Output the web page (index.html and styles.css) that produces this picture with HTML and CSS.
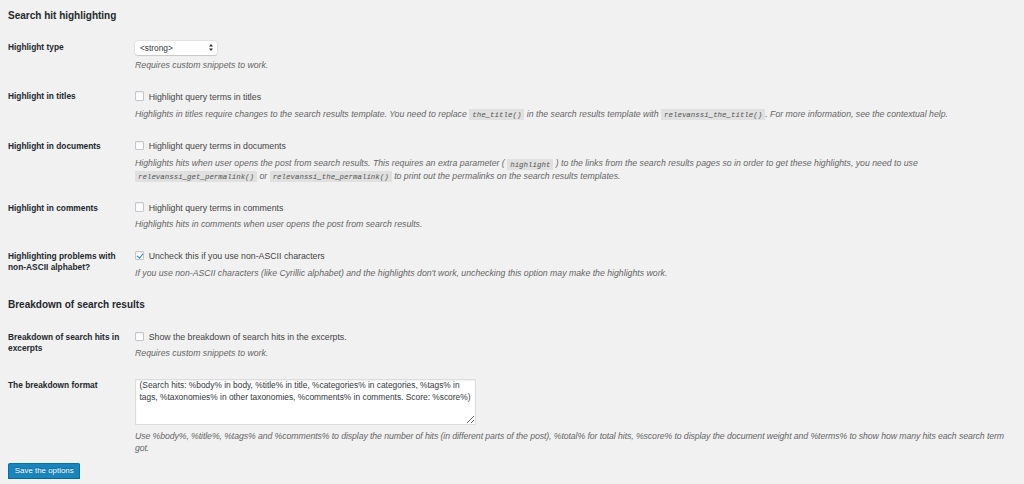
FILE: index.html
```html
<!DOCTYPE html>
<html lang="en">
<head>
<meta charset="utf-8">
<title>Relevanssi settings</title>
<link rel="stylesheet" href="styles.css">
</head>
<body>
<div class="wrap">
  <h2 class="section-title">Search hit highlighting</h2>
  <div class="form-table">
    <div class="row">
      <div class="th">Highlight type</div>
      <div class="td">
        <span class="select-wrap">
          <select class="select"><option>&lt;strong&gt;</option></select>
          <svg class="select-arrow" width="4" height="7" viewBox="0 0 4 7"><path d="M2 0 L4 2.6 H0 Z M2 7 L4 4.4 H0 Z" fill="#333"/></svg>
        </span>
        <p class="description description--after-select">Requires custom snippets to work.</p>
      </div>
    </div>
    <div class="row">
      <div class="th">Highlight in titles</div>
      <div class="td">
        <label class="check-line"><input type="checkbox" class="checkbox"> Highlight query terms in titles</label>
        <p class="description description--code">Highlights in titles require changes to the search results template. You need to replace <code>the_title()</code> in the search results template with <code>relevanssi_the_title()</code>. For more information, see the contextual help.</p>
      </div>
    </div>
    <div class="row">
      <div class="th">Highlight in documents</div>
      <div class="td">
        <label class="check-line"><input type="checkbox" class="checkbox"> Highlight query terms in documents</label>
        <p class="description description--code">Highlights hits when user opens the post from search results. This requires an extra parameter ( <code>highlight</code> ) to the links from the search results pages so in order to get these highlights, you need to use <code>relevanssi_get_permalink()</code> or <code>relevanssi_the_permalink()</code> to print out the permalinks on the search results templates.</p>
      </div>
    </div>
    <div class="row">
      <div class="th">Highlight in comments</div>
      <div class="td">
        <label class="check-line"><input type="checkbox" class="checkbox"> Highlight query terms in comments</label>
        <p class="description">Highlights hits in comments when user opens the post from search results.</p>
      </div>
    </div>
    <div class="row">
      <div class="th">Highlighting problems with non-ASCII alphabet?</div>
      <div class="td">
        <label class="check-line"><input type="checkbox" class="checkbox" checked> Uncheck this if you use non-ASCII characters</label>
        <p class="description">If you use non-ASCII characters (like Cyrillic alphabet) and the highlights don't work, unchecking this option may make the highlights work.</p>
      </div>
    </div>
  </div>

  <h2 class="section-title section-title--spaced">Breakdown of search results</h2>
  <div class="form-table">
    <div class="row">
      <div class="th">Breakdown of search hits in excerpts</div>
      <div class="td">
        <label class="check-line"><input type="checkbox" class="checkbox"> Show the breakdown of search hits in the excerpts.</label>
        <p class="description">Requires custom snippets to work.</p>
      </div>
    </div>
    <div class="row">
      <div class="th">The breakdown format</div>
      <div class="td">
        <textarea class="textarea">(Search hits: %body% in body, %title% in title, %categories% in categories, %tags% in tags, %taxonomies% in other taxonomies, %comments% in comments. Score: %score%)</textarea>
        <p class="description description--after-textarea">Use %body%, %title%, %tags% and %comments% to display the number of hits (in different parts of the post), %total% for total hits, %score% to display the document weight and %terms% to show how many hits each search term got.</p>
      </div>
    </div>
  </div>

  <div class="submit"><button type="button" class="button-primary">Save the options</button></div>
</div>
</body>
</html>
```

FILE: styles.css
```css
* { box-sizing: border-box; }

body {
  margin: 0;
  background: #f1f1f1;
  font-family: "Liberation Sans", Arial, sans-serif;
  color: #444;
}

.wrap {
  padding: 0 11px 0 8px;
}

.section-title {
  margin: 8.5px 0 9px;
  font-size: 10px;
  line-height: 13px;
  font-weight: 700;
  color: #23282d;
}

.section-title--spaced {
  margin-top: 10.3px;
}

.row {
  display: flex;
  align-items: flex-start;
}

.th {
  flex: none;
  width: 127px;
  padding: 11.6px 8px 11.6px 0;
  font-size: 8.35px;
  line-height: 11px;
  font-weight: 700;
  color: #23282d;
}

.td {
  flex: 1;
  min-width: 0;
  padding: 8.85px 0;
  font-size: 8.75px;
  color: #444;
}

.check-line {
  display: flex;
  align-items: center;
  gap: 4.3px;
  height: 16.6px;
  line-height: 16.6px;
  color: #444;
}

.checkbox {
  appearance: none;
  -webkit-appearance: none;
  flex: none;
  position: relative;
  width: 9.4px;
  height: 9.4px;
  margin: -2px 0 0 0;
  border: 1px solid #c3c7cb;
  border-radius: 1px;
  background: #fff;
  box-shadow: inset 0 1px 2px rgba(0, 0, 0, 0.08);
}

.checkbox:checked::before {
  content: "";
  position: absolute;
  left: 2.4px;
  top: 0.4px;
  width: 2.6px;
  height: 5px;
  border: solid #1e8cbe;
  border-width: 0 1.5px 1.5px 0;
  transform: rotate(40deg);
}

.description {
  margin: 2.7px 0 0;
  font-size: 8.72px;
  line-height: 11.5px;
  font-style: italic;
  color: #666;
}

.description--code {
  line-height: 12.4px;
}

.description--after-select {
  margin-top: 4.55px;
}

.description--after-textarea {
  margin-top: 6.2px;
  letter-spacing: -0.09px;
}

code {
  font-family: "Liberation Mono", "DejaVu Sans Mono", monospace;
  font-size: 7.45px;
  line-height: 0;
  padding: 1.8px 3px 1.2px;
  background: rgba(0, 0, 0, 0.07);
  color: #555;
}

.select-wrap {
  position: relative;
  display: inline-block;
  vertical-align: top;
  margin-top: 1.35px;
}

.select {
  appearance: none;
  -webkit-appearance: none;
  display: block;
  width: 81.5px;
  height: 14.3px;
  margin: 0;
  padding: 0 0 0 5px;
  border: 0;
  border-radius: 2.5px;
  background: #fff;
  box-shadow: 0 0 0 0.5px rgba(0, 0, 0, 0.12), 0 1px 1px rgba(0, 0, 0, 0.12);
  font-family: "Liberation Sans", Arial, sans-serif;
  font-size: 8.3px;
  color: #32373c;
}

.select-arrow {
  position: absolute;
  right: 4px;
  top: 3.7px;
}

.textarea {
  display: block;
  width: 341px;
  height: 46.3px;
  margin: 1px 0 0;
  padding: 0.6px 1.5px 0.6px 3.5px;
  border: 1px solid #ddd;
  background: #fff;
  box-shadow: inset 0 1px 2px rgba(0, 0, 0, 0.07);
  font-family: "Liberation Sans", Arial, sans-serif;
  font-size: 8.4px;
  line-height: 11.7px;
  color: #32373c;
  resize: vertical;
}

.submit {
  display: flex;
  margin: 0;
}

.button-primary {
  height: 16.4px;
  margin: 0;
  padding: 0 5.85px;
  border: 1px solid #0073aa;
  border-bottom-color: #006799;
  border-radius: 2px;
  background: #1a84bb;
  box-shadow: 0 1px 0 #006799;
  font-family: "Liberation Sans", Arial, sans-serif;
  font-size: 7.9px;
  line-height: 14px;
  color: #fff;
  text-shadow: 0 -1px 1px #006799;
}
```
